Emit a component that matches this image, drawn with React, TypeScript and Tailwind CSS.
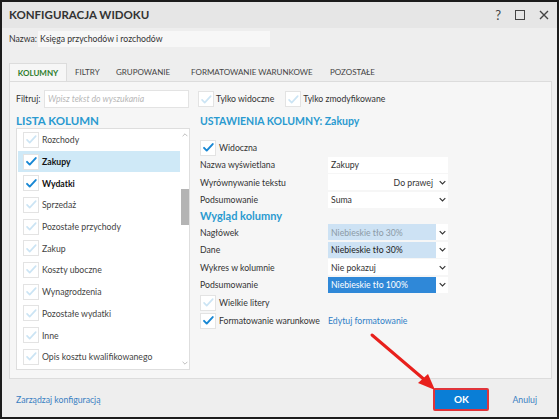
import React from "react";

const font = { fontFamily: "Lato, 'Noto Sans', sans-serif" };

function Check({ on }: { on?: boolean }) {
  return (
    <span className="w-[16px] h-[16px] bg-white border border-[#e3e3e3] flex items-center justify-center shrink-0">
      <svg viewBox="0 0 16 16" className="w-[13px] h-[13px]">
        {on ? (
          <path d="M2.5 8.5l3.3 3.3 7.4-8" fill="none" stroke="#1787d4" strokeWidth="2.4" strokeLinecap="round" strokeLinejoin="round" />
        ) : (
          <path d="M2.5 8.5l3.3 3.3 7.4-8" fill="none" stroke="#cbe4f4" strokeWidth="2" strokeLinecap="round" strokeLinejoin="round" />
        )}
      </svg>
    </span>
  );
}

function Chevron() {
  return (
    <svg viewBox="0 0 10 6" className="w-[7px] h-[5px]">
      <path d="M1 1l4 4 4-4" fill="none" stroke="#333" strokeWidth="1.6" />
    </svg>
  );
}

type Tone = "white" | "muted" | "light" | "blue";

function Select({ value, tone = "white", right }: { value: string; tone?: Tone; right?: boolean }) {
  const box =
    tone === "blue"
      ? "bg-[#2f88d8] text-white"
      : tone === "light"
      ? "bg-[#cde2f4] text-[#222]"
      : tone === "muted"
      ? "bg-[#cde2f4] text-[#8c9aa6]"
      : "bg-white text-[#333]";
  return (
    <div className="w-[120px] h-[16px] flex bg-white">
      <div className={"flex-1 flex items-center px-[3px] whitespace-nowrap " + box + (right ? " justify-end" : "")}>{value}</div>
      <div className="w-[12px] flex items-center justify-center">
        <Chevron />
      </div>
    </div>
  );
}

function Row({ label, children }: { label: string; children: React.ReactNode }) {
  return (
    <div className="h-[17.5px] flex items-center">
      <div className="w-[128px] text-[#333] whitespace-nowrap">{label}</div>
      {children}
    </div>
  );
}

const columns: { name: string; on?: boolean; bold?: boolean; selected?: boolean }[] = [
  { name: "Rozchody" },
  { name: "Zakupy", on: true, bold: true, selected: true },
  { name: "Wydatki", on: true, bold: true },
  { name: "Sprzedaż" },
  { name: "Pozostałe przychody" },
  { name: "Zakup" },
  { name: "Koszty uboczne" },
  { name: "Wynagrodzenia" },
  { name: "Pozostałe wydatki" },
  { name: "Inne" },
  { name: "Opis kosztu kwalifikowanego" },
  { name: "" },
];

export default function App() {
  return (
    <div className="relative w-[559px] h-[419px] border-2 border-[#1c1c1c] bg-[#eeeeee] flex flex-col text-[8.7px]" style={font}>
      {/* Title bar */}
      <div className="h-[26px] bg-[#e6e6e6] flex items-center justify-between pl-[7px] pr-[8px]">
        <div className="font-bold text-[11.5px] text-[#333]">KONFIGURACJA WIDOKU</div>
        <div className="flex items-center gap-[14px] text-[#444]">
          <span className="text-[13px] leading-none">?</span>
          <span className="w-[10px] h-[10px] border-[1.5px] border-[#444]" />
          <svg viewBox="0 0 10 10" className="w-[10px] h-[10px]">
            <path d="M1 1l8 8M9 1l-8 8" stroke="#444" strokeWidth="1.4" />
          </svg>
        </div>
      </div>

      {/* Nazwa */}
      <div className="mt-[3px] h-[16px] flex items-center pl-[7px]">
        <span className="text-[#333] w-[29px] whitespace-nowrap">Nazwa:</span>
        <div className="w-[232px] h-[16px] bg-[#f7f7f7] flex items-center px-[2px] text-[#333]">Księga przychodów i rozchodów</div>
      </div>

      {/* Tabs */}
      <div className="mt-[16px] h-[18px] flex items-end pl-[7px] text-[8px] whitespace-nowrap">
        <div className="h-[18px] w-[58px] bg-[#f6f6f6] border border-b-0 border-[#dcdcdc] flex items-center justify-center font-bold text-[#2d7d2d]">
          KOLUMNY
        </div>
        <div className="h-[18px] flex items-center text-[#444] pl-[8px]">
          <span className="w-[41px]">FILTRY</span>
          <span className="w-[75px]">GRUPOWANIE</span>
          <span className="w-[139px]">FORMATOWANIE WARUNKOWE</span>
          <span>POZOSTAŁE</span>
        </div>
      </div>

      {/* Panel */}
      <div className="h-[298px] ml-[7px] mr-[5px] bg-[#f6f6f6] border border-[#dcdcdc] pl-[6px] pt-[8px]">
        <div className="h-[18px] flex items-center whitespace-nowrap">
          <span className="text-[#333] w-[28px]">Filtruj:</span>
          <div className="w-[145px] h-[18px] bg-white border border-[#e3e3e3] flex items-center px-[3px] italic text-[#b8b8b8]">
            Wpisz tekst do wyszukania
          </div>
          <div className="ml-[9px] flex items-center gap-[2px]">
            <Check />
            <span className="text-[#333]">Tylko widoczne</span>
          </div>
          <div className="ml-[11px] flex items-center gap-[2px]">
            <Check />
            <span className="text-[#333]">Tylko zmodyfikowane</span>
          </div>
        </div>

        <div className="mt-[6px] flex gap-[10px]">
          {/* Left column */}
          <div className="w-[174px]">
            <div className="h-[14px] font-bold text-[11.5px] text-[#2a9ad0] leading-[14px]">LISTA KOLUMN</div>
            <div className="h-[242px] bg-white border border-[#dedede] flex overflow-hidden">
              <div className="flex-1 pl-[1px] overflow-hidden">
                {columns.map((c, i) => (
                  <div
                    key={i}
                    className={"h-[21.7px] flex items-center pl-[5px] gap-[3px] whitespace-nowrap " + (c.selected ? "bg-[#cfe9f7]" : "")}
                  >
                    <Check on={c.on} />
                    <span className={c.bold ? "font-bold text-[#111]" : "text-[#444]"}>{c.name}</span>
                  </div>
                ))}
              </div>
              <div className="w-[9px] flex flex-col items-center pt-[4px] pb-[4px]">
                <svg viewBox="0 0 10 6" className="w-[6px] h-[4px]">
                  <path d="M1 5l4-4 4 4" fill="none" stroke="#aaa" strokeWidth="1.3" />
                </svg>
                <div className="mt-[52px] w-[8px] h-[36px] bg-[#b4b4b4]" />
                <div className="flex-1" />
                <svg viewBox="0 0 10 6" className="w-[6px] h-[4px]">
                  <path d="M1 1l4 4 4-4" fill="none" stroke="#aaa" strokeWidth="1.3" />
                </svg>
              </div>
            </div>
          </div>

          {/* Right column */}
          <div className="w-[248px]">
            <div className="h-[14px] font-bold text-[10.5px] text-[#2a9ad0] leading-[14px] whitespace-nowrap">USTAWIENIA KOLUMNY: Zakupy</div>
            <div className="mt-[11px] h-[17px] flex items-center gap-[3px]">
              <Check on />
              <span className="text-[#333]">Widoczna</span>
            </div>
            <Row label="Nazwa wyświetlana">
              <div className="w-[120px] h-[16px] bg-white flex items-center px-[3px] text-[#333]">Zakupy</div>
            </Row>
            <Row label="Wyrównywanie tekstu">
              <Select value="Do prawej" right />
            </Row>
            <Row label="Podsumowanie">
              <Select value="Suma" />
            </Row>
            <div className="h-[15px] flex items-center font-bold text-[11px] text-[#2a9ad0]">Wygląd kolumny</div>
            <Row label="Nagłówek">
              <Select value="Niebieskie tło 30%" tone="muted" />
            </Row>
            <Row label="Dane">
              <Select value="Niebieskie tło 30%" tone="light" />
            </Row>
            <Row label="Wykres w kolumnie">
              <Select value="Nie pokazuj" />
            </Row>
            <Row label="Podsumowanie">
              <Select value="Niebieskie tło 100%" tone="blue" />
            </Row>
            <div className="h-[18px] flex items-center gap-[3px]">
              <Check />
              <span className="text-[#333]">Wielkie litery</span>
            </div>
            <div className="h-[18px] flex items-center whitespace-nowrap">
              <div className="w-[128px] flex items-center gap-[3px]">
                <Check on />
                <span className="text-[#333]">Formatowanie warunkowe</span>
              </div>
              <span className="text-[#2f7fc6]">Edytuj formatowanie</span>
            </div>
          </div>
        </div>
      </div>

      {/* Bottom */}
      <div className="flex-1 flex items-center pl-[14px] pr-[20px] pt-[3px]">
        <span className="text-[#3a7fc2]">Zarządzaj konfiguracją</span>
        <div className="flex-1" />
        <button className="w-[56px] h-[23px] bg-[#0a7ed6] border-2 border-[#e0343a] rounded-[2px] text-white font-bold text-[10px]">
          OK
        </button>
        <span className="ml-[23px] text-[#3a7fc2]">Anuluj</span>
      </div>

      {/* Annotation arrow */}
      <svg className="absolute left-0 top-0 pointer-events-none" width="559" height="419" viewBox="0 0 559 419">
        <line x1="370" y1="333" x2="424" y2="379" stroke="#e8201c" strokeWidth="3" strokeLinecap="round" />
        <path d="M433 388 L416 381 L426 372 Z" fill="#e8201c" />
      </svg>
    </div>
  );
}
